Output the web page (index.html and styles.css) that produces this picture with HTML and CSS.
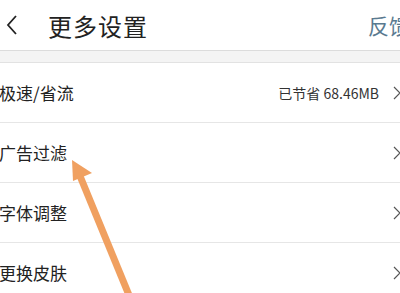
FILE: index.html
```html
<!DOCTYPE html>
<html>
<head>
  <title>更多设置</title>
  <link rel="stylesheet" href="styles.css">
</head>
<body>
  <div class="page">
    <div class="header">
      <svg class="back" width="12" height="22" viewBox="0 0 12 22"><path d="M10 2 L2 11 L10 20" fill="none" stroke="#222" stroke-width="1.8"/></svg>
      <div class="title">更多设置</div>
      <div class="feedback">反馈</div>
    </div>
    <div class="gap"></div>
    <div class="list">
      <div class="row">
        <div class="label">极速/省流</div>
        <div class="right">
          <span class="value">已节省 68.46MB</span>
          <svg class="chev" width="9" height="14" viewBox="0 0 9 14"><path d="M1 1 L7 7 L1 13" fill="none" stroke="#555" stroke-width="1.2"/></svg>
        </div>
      </div>
      <div class="row">
        <div class="label">广告过滤</div>
        <div class="right">
          <svg class="chev" width="9" height="14" viewBox="0 0 9 14"><path d="M1 1 L7 7 L1 13" fill="none" stroke="#555" stroke-width="1.2"/></svg>
        </div>
      </div>
      <div class="row">
        <div class="label">字体调整</div>
        <div class="right">
          <svg class="chev" width="9" height="14" viewBox="0 0 9 14"><path d="M1 1 L7 7 L1 13" fill="none" stroke="#555" stroke-width="1.2"/></svg>
        </div>
      </div>
      <div class="row">
        <div class="label">更换皮肤</div>
        <div class="right">
          <svg class="chev" width="9" height="14" viewBox="0 0 9 14"><path d="M1 1 L7 7 L1 13" fill="none" stroke="#555" stroke-width="1.2"/></svg>
        </div>
      </div>
    </div>
    <!-- annotation arrow -->
    <svg class="pointer" width="400" height="293" viewBox="0 0 400 293">
      <line x1="131" y1="300" x2="80" y2="176" stroke="#f0a060" stroke-width="7"/>
      <polygon points="72,160 92,173 73,181" fill="#f0a060"/>
    </svg>
  </div>
</body>
</html>
```

FILE: styles.css
```css
/* settings screen */
body {
  margin: 0;
  font-family: "Noto Sans CJK SC", "Noto Sans", sans-serif;
  color: #222;
  background: #fff;
}
.page {
  position: relative;
  width: 400px;
  height: 293px;
  overflow: hidden;
}
.header {
  height: 50px;
  display: flex;
  align-items: center;
}
.back {
  margin-left: 6px;
}
.title {
  margin-left: 30px;
  font-size: 24px;
  letter-spacing: 1px;
}
.feedback {
  margin-left: auto;
  margin-right: -10px;
  font-size: 21px;
  color: #5a7a90;
  white-space: nowrap;
}
.gap {
  height: 11px;
  background: #f4f4f4;
  border-top: 1px solid #dcdcdc;
  border-bottom: 1px solid #e2e2e2;
}
.row {
  height: 59px;
  display: flex;
  align-items: center;
  border-bottom: 1px solid #e6e6e6;
}
.label {
  margin-left: -1px;
  font-size: 17px;
}
.right {
  margin-left: auto;
  display: flex;
  align-items: center;
  margin-right: -2px;
}
.value {
  font-size: 14px;
  color: #333;
  margin-right: 14px;
}
.pointer {
  position: absolute;
  left: 0;
  top: 0;
}
```
